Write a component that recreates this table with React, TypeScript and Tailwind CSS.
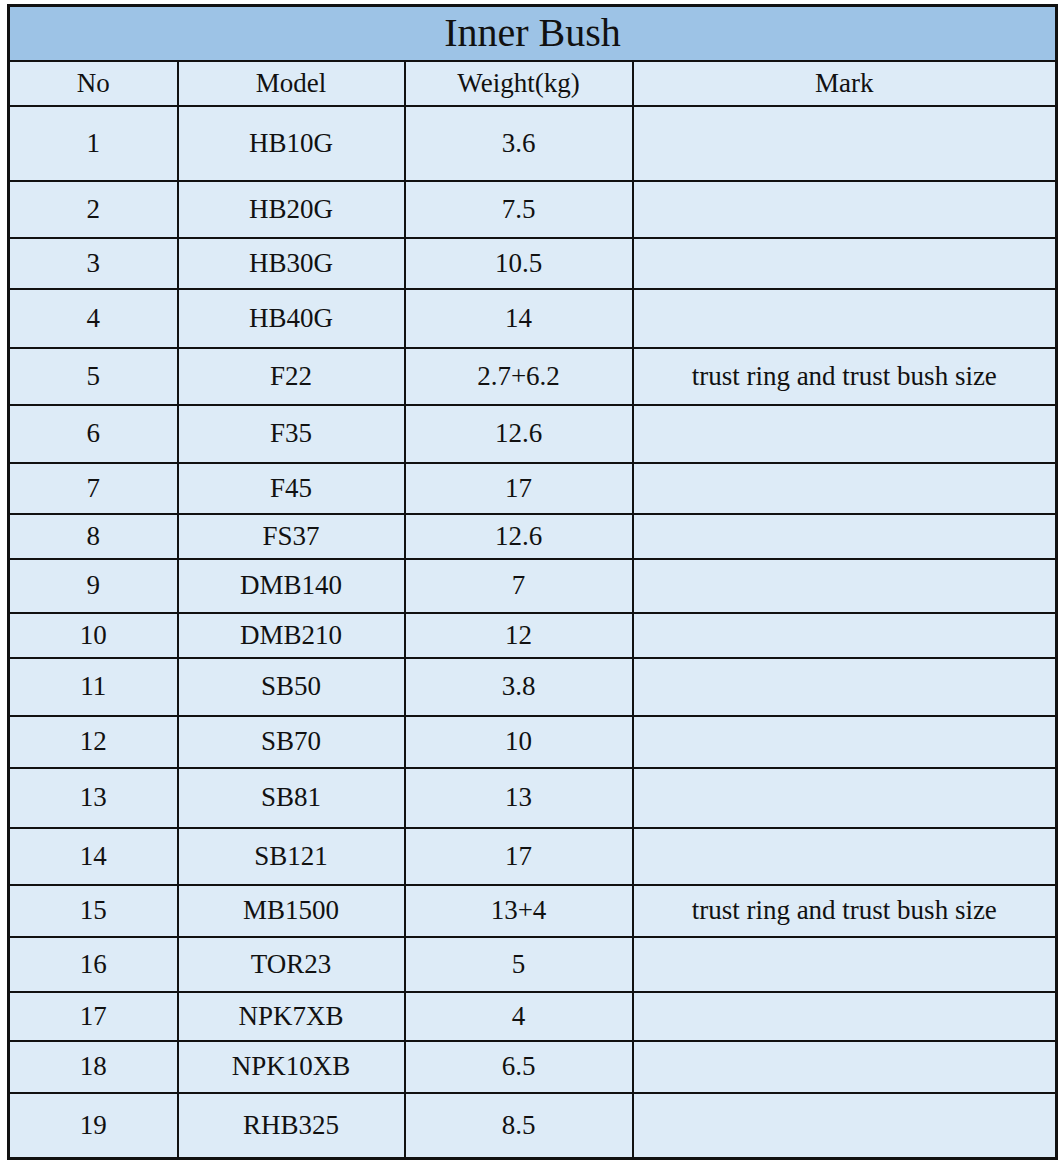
const rows: [string, string, string, string, number][] = [
  ["1", "HB10G", "3.6", "", 75],
  ["2", "HB20G", "7.5", "", 57],
  ["3", "HB30G", "10.5", "", 51],
  ["4", "HB40G", "14", "", 59],
  ["5", "F22", "2.7+6.2", "trust ring and trust bush size", 57],
  ["6", "F35", "12.6", "", 58],
  ["7", "F45", "17", "", 51],
  ["8", "FS37", "12.6", "", 45],
  ["9", "DMB140", "7", "", 54],
  ["10", "DMB210", "12", "", 45],
  ["11", "SB50", "3.8", "", 58],
  ["12", "SB70", "10", "", 52],
  ["13", "SB81", "13", "", 60],
  ["14", "SB121", "17", "", 57],
  ["15", "MB1500", "13+4", "trust ring and trust bush size", 52],
  ["16", "TOR23", "5", "", 55],
  ["17", "NPK7XB", "4", "", 49],
  ["18", "NPK10XB", "6.5", "", 52],
  ["19", "RHB325", "8.5", "", 66],
];

const cell = "border-2 border-[#111] text-center align-middle p-0";

export default function App() {
  return (
    <div className="w-[1060px] h-[1166px] bg-white pl-[7px] pt-[4px] font-['Liberation_Serif',serif] text-[#111]">
      <table className="w-[1051px] table-fixed border-collapse border-[3px] border-[#111] text-[27px] leading-none">
        <colgroup>
          <col className="w-[169px]" />
          <col className="w-[227px]" />
          <col className="w-[228px]" />
          <col />
        </colgroup>
        <tbody>
          <tr>
            <td colSpan={4} className={`${cell} h-[55px] bg-[#9dc3e6] text-[40px]`}>
              Inner Bush
            </td>
          </tr>
          <tr className="bg-[#ddebf7]">
            <td className={`${cell} h-[45px]`}>No</td>
            <td className={cell}>Model</td>
            <td className={cell}>Weight(kg)</td>
            <td className={cell}>Mark</td>
          </tr>
          {rows.map(([no, model, weight, mark, h]) => (
            <tr key={no} className="bg-[#ddebf7]">
              <td className={cell} style={{ height: h }}>
                {no}
              </td>
              <td className={cell}>{model}</td>
              <td className={cell}>{weight}</td>
              <td className={cell}>{mark}</td>
            </tr>
          ))}
        </tbody>
      </table>
    </div>
  );
}
